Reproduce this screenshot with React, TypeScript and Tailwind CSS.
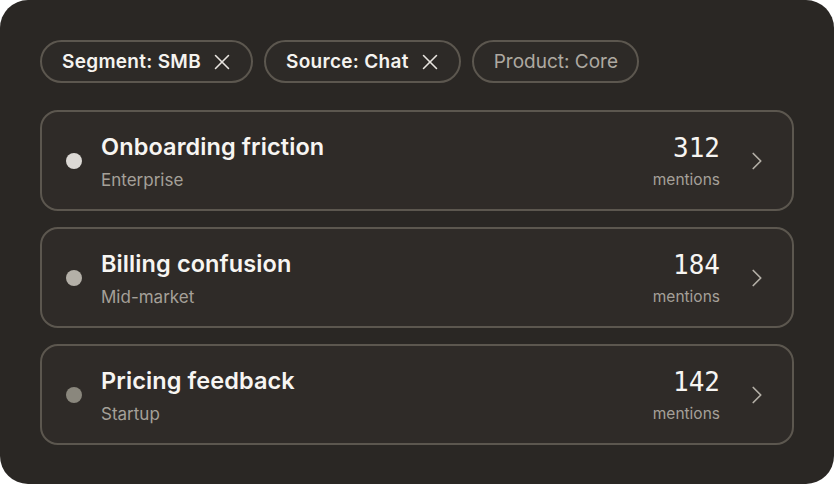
import { X, ChevronRight } from 'lucide-react';

const filters = [
    { label: 'Segment: SMB', active: true },
    { label: 'Source: Chat', active: true },
    { label: 'Product: Core', active: false },
];

const themes = [
    { title: 'Onboarding friction', segment: 'Enterprise', count: 312, dot: 'bg-[#dcd9d5]' },
    { title: 'Billing confusion', segment: 'Mid-market', count: 184, dot: 'bg-[#b4b0a8]' },
    { title: 'Pricing feedback', segment: 'Startup', count: 142, dot: 'bg-[#8a877d]' },
];

export default function App() {
    return (
        <div className="h-[484px] w-[834px] bg-white" style={{ fontFamily: 'Inter, "Noto Sans", sans-serif' }}>
            <div className="flex h-full w-full flex-col rounded-[28px] bg-[#2a2724] px-10 pt-10 pb-[41px]">
                {/* Filtres */}
                <div className="flex items-center gap-[11px]">
                    {filters.map((f) => (
                        <span
                            key={f.label}
                            className={
                                f.active
                                    ? 'flex h-[43px] items-center gap-[14px] rounded-full border-2 border-[#5c574f] bg-[#2d2a27] pt-[2px] pl-5 pr-[22px] text-[19px] font-semibold tracking-[0.3px] text-[#f5f3ef]'
                                    : 'flex h-[43px] items-center rounded-full border-2 border-[#5c574f] bg-[#2d2a27] pt-[2px] pl-5 pr-[19px] text-[19px] text-[#aea9a1]'
                            }
                        >
                            {f.label}
                            {f.active && <X size={26} strokeWidth={1.4} className="-mx-[6px] -mt-[2px] text-[#e8e5e0]" />}
                        </span>
                    ))}
                </div>

                {/* Liste des thèmes */}
                <div className="mt-[27px] flex flex-col gap-4">
                    {themes.map((t) => (
                        <div
                            key={t.title}
                            className="flex h-[101px] items-center rounded-[18px] border-2 border-[#5c574f] bg-[#2f2b28] pl-6 pr-5"
                        >
                            <span className={`h-[16px] w-[16px] rounded-full ${t.dot}`} />
                            <div className="ml-[19px] flex flex-1 flex-col">
                                <span className="text-[23.5px] font-semibold leading-[30px] tracking-[0.1px] text-[#f7f5f2]">{t.title}</span>
                                <span className="mt-2 text-[17px] leading-5 text-[#a5a099]">{t.segment}</span>
                            </div>
                            <div className="flex flex-col items-end pt-[2px]">
                                <span
                                    className="text-[26px] leading-[30px] text-[#f7f5f2]"
                                    style={{ fontFamily: '"DejaVu Sans Mono", monospace' }}
                                >
                                    {t.count}
                                </span>
                                <span className="mt-[7px] text-[15.5px] leading-5 text-[#a5a099]">mentions</span>
                            </div>
                            <ChevronRight size={30} strokeWidth={1.4} className="ml-[22px] text-[#b3aea6]" />
                        </div>
                    ))}
                </div>
            </div>
        </div>
    );
}
